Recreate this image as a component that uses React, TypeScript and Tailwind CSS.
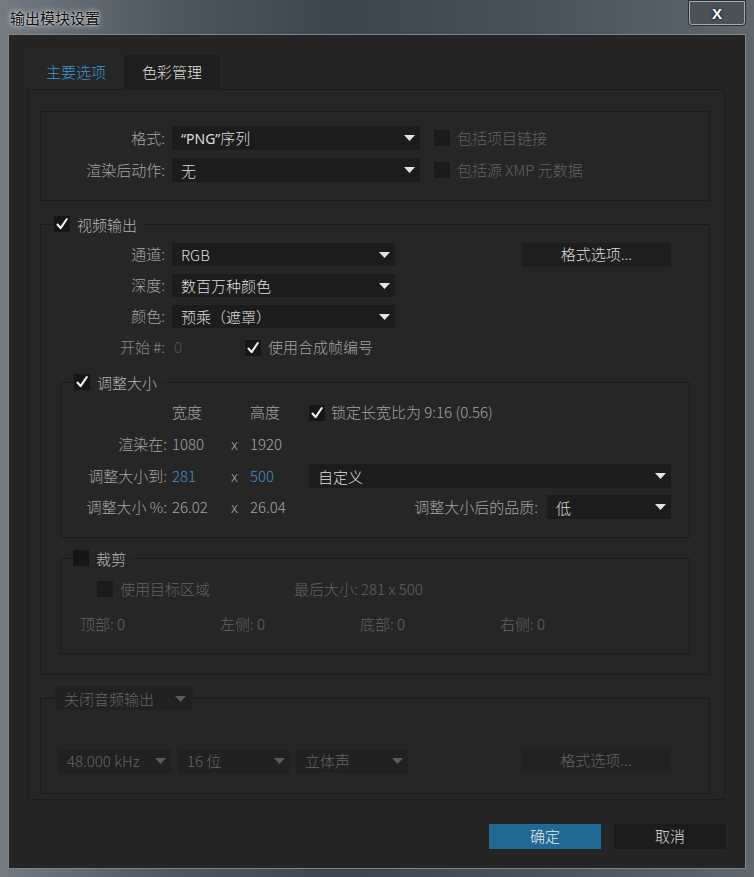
import clsx from "clsx";

const labelText = "text-[#a4a4a4]";
const dimText = "text-[#626262]";

function Arrow({ dim }: { dim?: boolean }) {
  return (
    <svg width="11" height="6" viewBox="0 0 11 6" className="shrink-0">
      <polygon points="0,0 11,0 5.5,6" fill={dim ? "#5c5c5c" : "#e4e4e4"} />
    </svg>
  );
}

function Dropdown({
  value,
  className,
  dim,
}: {
  value: React.ReactNode;
  className: string;
  dim?: boolean;
}) {
  return (
    <div
      className={clsx(
        "flex items-center justify-between pl-[9px] pr-[5px] shrink-0",
        dim ? "bg-[#212121] text-[#646464]" : "bg-[#1c1c1c] text-[#dedede]",
        className
      )}
    >
      <span className="leading-none whitespace-nowrap">{value}</span>
      <Arrow dim={dim} />
    </div>
  );
}

function Checkbox({ checked, dim }: { checked?: boolean; dim?: boolean }) {
  return (
    <div
      className={clsx(
        "w-[16px] h-[16px] shrink-0 flex items-center justify-center",
        dim ? "bg-[#1b1b1b]" : "bg-[#161616]"
      )}
    >
      {checked && (
        <svg width="14" height="14" viewBox="0 0 14 14">
          <path
            d="M2.5 7.5 L5.6 11.2 L11.8 2"
            fill="none"
            stroke="#f2f2f2"
            strokeWidth="2.1"
            strokeLinecap="round"
            strokeLinejoin="round"
          />
        </svg>
      )}
    </div>
  );
}

function Header({
  label,
  checked,
  className,
}: {
  label: string;
  checked?: boolean;
  className: string;
}) {
  return (
    <div
      className={clsx(
        "flex items-center gap-[7px] self-start bg-[#262626] pr-[6px] h-[16px] -mt-[9px]",
        className
      )}
    >
      <Checkbox checked={checked} />
      <span className="leading-none text-[#b4b4b4]">{label}</span>
    </div>
  );
}

export default function App() {
  return (
    <div className="w-[754px] h-[877px] overflow-hidden font-['Noto_Sans_CJK_SC','Noto_Sans',sans-serif] font-light text-[15px] bg-[linear-gradient(90deg,#737b81_0%,#4f585f_22%,#3c454d_45%,#48515a_70%,#5f676d_100%)]">
      {/* title bar */}
      <div className="h-[34px] flex justify-between items-start">
        <div className="pl-[10px] pt-[10px] text-[15px] leading-none font-normal text-[#0e0e0e] [text-shadow:0_0_6px_rgba(255,255,255,0.9),0_0_2px_rgba(255,255,255,0.8)]">
          输出模块设置
        </div>
        <div className="mr-[8px] w-[58px] h-[26px] rounded-b-[4px] border border-[#2a2f33] bg-[#4a5157] flex">
          <div className="flex-1 rounded-b-[3px] border border-[#a6adb2] flex items-center justify-center text-white font-bold text-[15px] leading-none font-['Liberation_Sans',sans-serif] [text-shadow:0_0_3px_#000]">
            X
          </div>
        </div>
      </div>

      {/* dialog body */}
      <div className="mx-[8px] w-[738px] h-[835px] border border-[#7d858b] bg-[#252525] pl-[19px] pt-[20px] flex flex-col">
        {/* tabs */}
        <div className="flex h-[34px]">
          <div className="w-[96px] bg-[#262626] flex items-center justify-center text-[#3b96d3]">
            主要选项
          </div>
          <div className="w-[96px] bg-[#1e1e1e] flex items-center justify-center text-[#dedede]">
            色彩管理
          </div>
        </div>

        {/* tab panel */}
        <div className="w-[697px] h-[711px] border border-[#1c1c1c] bg-[#262626] pl-[11px] pt-[21px] flex flex-col">
          {/* format group */}
          <div className="w-[670px] h-[90px] border border-[#1b1b1b] pt-[14px] flex flex-col gap-[8px]">
            <div className="flex items-center h-[24px]">
              <div className={clsx("w-[124px] text-right", labelText)}>格式:</div>
              <Dropdown
                value={
                  <>
                    <span className="font-['Noto_Sans',sans-serif] font-normal text-[14px]">“PNG”</span>序列
                  </>
                }
                className="ml-[7px] w-[248px] h-[24px]"
              />
              <div className="ml-[14px]">
                <Checkbox dim />
              </div>
              <span className={clsx("ml-[7px]", dimText)}>包括项目链接</span>
            </div>
            <div className="flex items-center h-[24px]">
              <div className={clsx("w-[124px] text-right", labelText)}>渲染后动作:</div>
              <Dropdown value="无" className="ml-[7px] w-[248px] h-[24px]" />
              <div className="ml-[14px]">
                <Checkbox dim />
              </div>
              <span className={clsx("ml-[7px]", dimText)}>包括源 XMP 元数据</span>
            </div>
          </div>

          {/* video output group */}
          <div className="mt-[23px] w-[670px] h-[451px] border border-[#1b1b1b] flex flex-col">
            <Header label="视频输出" checked className="ml-[13px]" />

            <div className="mt-[11px] flex flex-col gap-[8px]">
              <div className="flex items-center h-[23px]">
                <div className={clsx("w-[124px] text-right", labelText)}>通道:</div>
                <Dropdown value="RGB" className="ml-[7px] w-[223px] h-[23px]" />
                <div className="ml-[127px] w-[149px] h-[24px] bg-[#1e1e1e] flex items-center justify-center text-[#dcdcdc]">
                  格式选项...
                </div>
              </div>
              <div className="flex items-center h-[23px]">
                <div className={clsx("w-[124px] text-right", labelText)}>深度:</div>
                <Dropdown value="数百万种颜色" className="ml-[7px] w-[223px] h-[23px]" />
              </div>
              <div className="flex items-center h-[23px]">
                <div className={clsx("w-[124px] text-right", labelText)}>颜色:</div>
                <Dropdown value="预乘（遮罩）" className="ml-[7px] w-[223px] h-[23px]" />
              </div>
              <div className="flex items-center h-[23px]">
                <div className="w-[124px] text-right text-[#8a8a8a]">开始 #:</div>
                <div className="ml-[7px] w-[73px] pl-[2px] text-[#565656]">0</div>
                <Checkbox checked />
                <span className={clsx("ml-[7px]", labelText)}>使用合成帧编号</span>
              </div>
            </div>

            {/* resize group */}
            <div className="mt-[23px] ml-[19px] w-[630px] h-[156px] border border-[#1b1b1b] flex flex-col">
              <Header label="调整大小" checked className="ml-[13px]" />
              <div className="mt-[11px] flex flex-col gap-[8px]">
                <div className="flex items-center h-[23px]">
                  <div className="w-[106px]" />
                  <div className={clsx("ml-[5px] w-[78px]", labelText)}>宽度</div>
                  <div className={clsx("w-[59px]", labelText)}>高度</div>
                  <Checkbox checked />
                  <span className={clsx("ml-[6px]", labelText)}>锁定长宽比为 9:16 (0.56)</span>
                </div>
                <div className="flex items-center h-[23px] mt-[1px]">
                  <div className={clsx("w-[106px] text-right", labelText)}>渲染在:</div>
                  <div className={clsx("ml-[5px] w-[59px]", labelText)}>1080</div>
                  <div className={clsx("w-[19px]", labelText)}>x</div>
                  <div className={clsx("w-[59px]", labelText)}>1920</div>
                </div>
                <div className="flex items-center h-[24px]">
                  <div className={clsx("w-[106px] text-right", labelText)}>调整大小到:</div>
                  <div className="ml-[5px] w-[59px] text-[#3d8fc7]">281</div>
                  <div className={clsx("w-[19px]", labelText)}>x</div>
                  <div className="w-[59px] text-[#3d8fc7]">500</div>
                  <Dropdown value="自定义" className="w-[362px] h-[24px]" />
                </div>
                <div className="flex items-center h-[24px] -mt-[1px]">
                  <div className={clsx("w-[106px] text-right", labelText)}>调整大小 %:</div>
                  <div className={clsx("ml-[5px] w-[59px]", labelText)}>26.02</div>
                  <div className={clsx("w-[19px]", labelText)}>x</div>
                  <div className={clsx("w-[59px]", labelText)}>26.04</div>
                  <div className={clsx("w-[229px] text-right", labelText)}>调整大小后的品质:</div>
                  <Dropdown value="低" className="ml-[9px] w-[124px] h-[24px]" />
                </div>
              </div>
            </div>

            {/* crop group */}
            <div className="mt-[20px] ml-[19px] w-[630px] h-[96px] border border-[#1b1b1b] flex flex-col">
              <Header label="裁剪" className="ml-[12px]" />
              <div className="mt-[15px] flex items-center h-[16px]">
                <div className="ml-[36px]">
                  <Checkbox dim />
                </div>
                <span className={clsx("ml-[7px] w-[174px]", dimText)}>使用目标区域</span>
                <span className={dimText}>最后大小: 281 x 500</span>
              </div>
              <div className="mt-[19px] flex items-center h-[16px] pl-[19px]">
                <div className={clsx("w-[140px]", dimText)}>顶部: 0</div>
                <div className={clsx("w-[140px]", dimText)}>左侧: 0</div>
                <div className={clsx("w-[140px]", dimText)}>底部: 0</div>
                <div className={clsx("w-[140px]", dimText)}>右侧: 0</div>
              </div>
            </div>
          </div>

          {/* audio group */}
          <div className="mt-[23px] w-[670px] h-[96px] border border-[#1b1b1b] flex flex-col">
            <div className="ml-[14px] -mt-[12px] self-start">
              <Dropdown value="关闭音频输出" dim className="w-[138px] h-[23px] pr-[7px]" />
            </div>
            <div className="mt-[38px] ml-[17px] flex items-center">
              <Dropdown value="48.000 kHz" dim className="w-[113px] h-[24px]" />
              <Dropdown value="16 位" dim className="ml-[7px] w-[112px] h-[24px]" />
              <Dropdown value="立体声" dim className="ml-[6px] w-[112px] h-[24px]" />
              <div className="ml-[113px] w-[150px] h-[25px] bg-[#222222] flex items-center justify-center text-[#626262]">
                格式选项...
              </div>
            </div>
          </div>
        </div>

        {/* buttons */}
        <div className="mt-[24px] flex justify-end gap-[13px] pr-[19px]">
          <div className="w-[112px] h-[25px] bg-[#1f6993] flex items-center justify-center text-[#e8e8e8]">
            确定
          </div>
          <div className="w-[112px] h-[25px] bg-[#1c1c1c] flex items-center justify-center text-[#dcdcdc]">
            取消
          </div>
        </div>
      </div>
    </div>
  );
}
